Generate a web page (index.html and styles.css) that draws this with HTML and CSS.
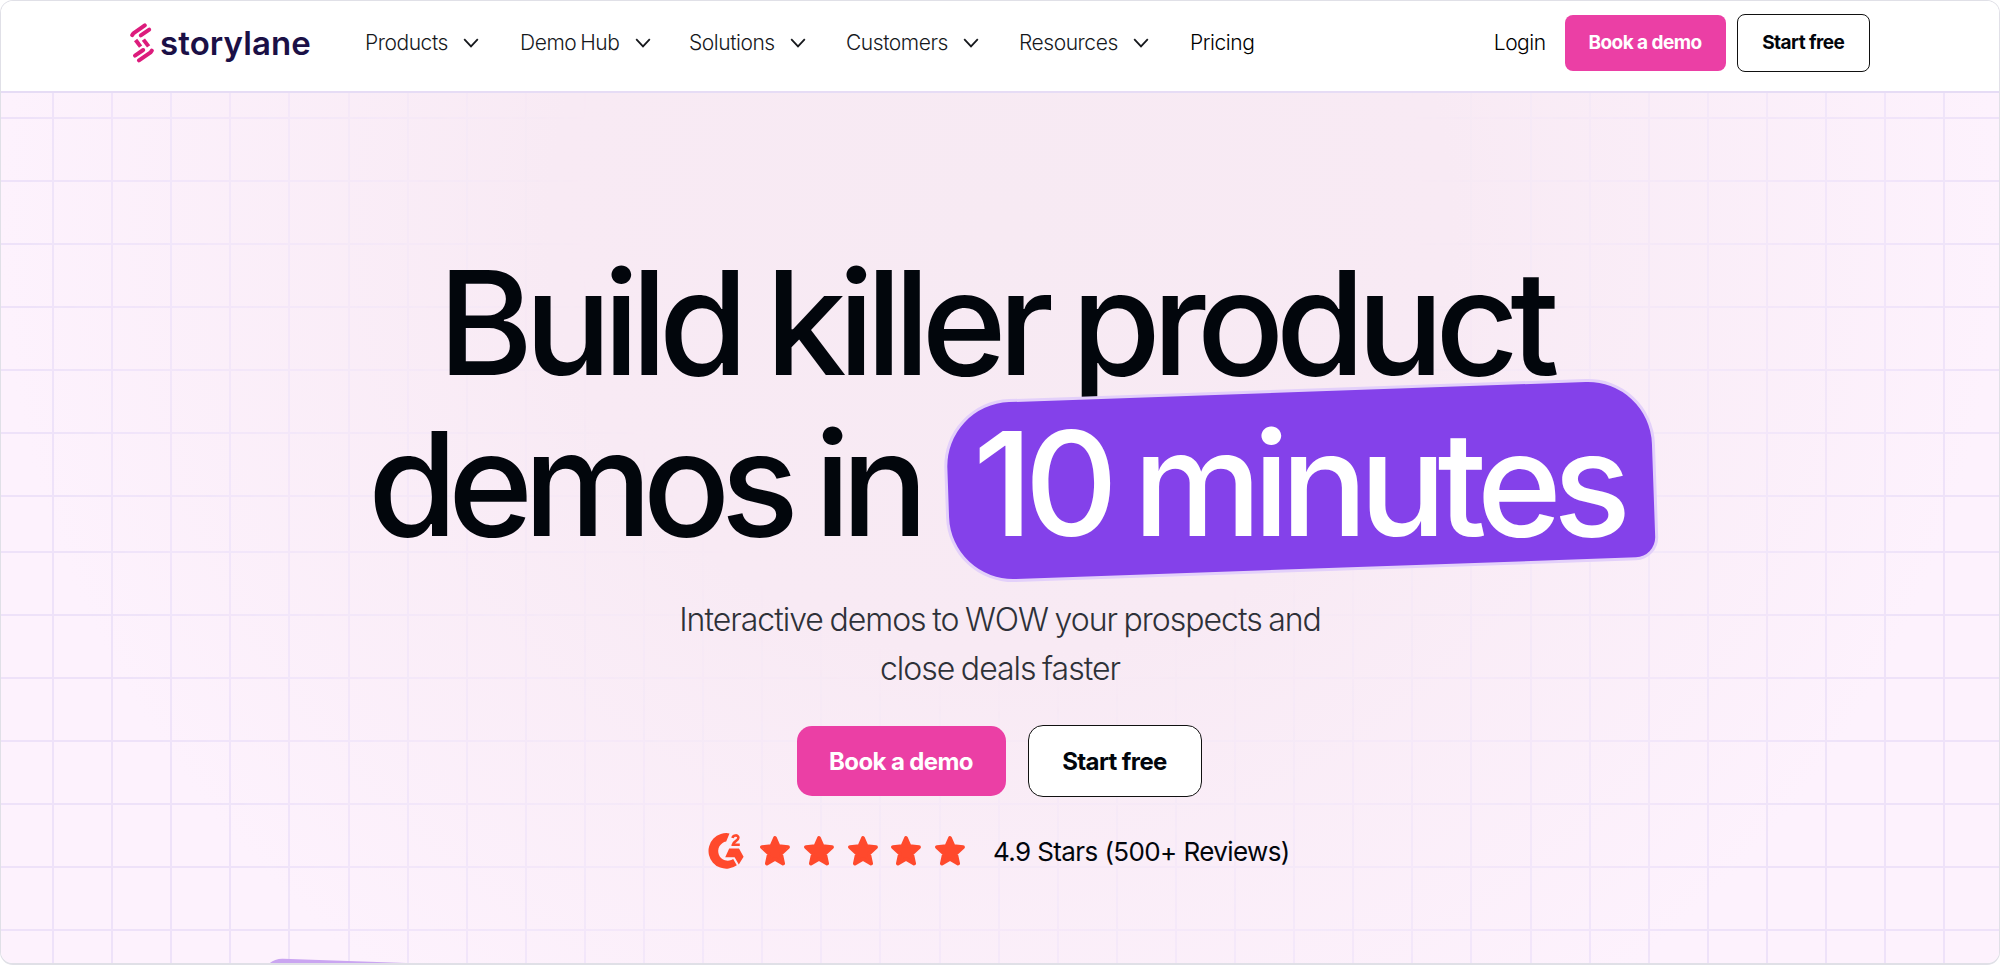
FILE: index.html
```html
<!DOCTYPE html>
<html lang="en">

<head>
  <meta charset="UTF-8">
  <meta name="viewport" content="width=device-width, initial-scale=1.0">
  <title>Storylane</title>
  <link rel="stylesheet" href="styles.css">
</head>

<body>

  <div class="page">

    <!-- Header -->
    <header class="header">
      <a class="logo" href="#">
        <svg class="logo-mark" viewBox="0 0 24 40" fill="none" stroke="#dc1c7c" stroke-width="4" stroke-linecap="round">
          <path d="M2.2 12.2 L3.4 10.4 L14.8 2.4" stroke-linejoin="round" />
          <path d="M10.8 12.4 L19.2 6.6" />
          <path d="M5.6 17 L10.6 23.6" stroke-linecap="butt" />
          <path d="M13.4 16.6 L18.6 23.4" stroke-linecap="butt" />
          <path d="M5 32.6 L13.2 27" />
          <path d="M9 37.4 L20.6 29.4 L21.8 27.6" stroke-linejoin="round" />
        </svg>
        <span class="logo-text">storylane</span>
      </a>

      <nav class="nav">
        <a href="#">Products <svg class="chevron" viewBox="0 0 16 10"><path d="M1.2 1.2 L8 8.4 L14.8 1.2" /></svg></a>
        <a href="#">Demo Hub <svg class="chevron" viewBox="0 0 16 10"><path d="M1.2 1.2 L8 8.4 L14.8 1.2" /></svg></a>
        <a href="#">Solutions <svg class="chevron" viewBox="0 0 16 10"><path d="M1.2 1.2 L8 8.4 L14.8 1.2" /></svg></a>
        <a href="#">Customers <svg class="chevron" viewBox="0 0 16 10"><path d="M1.2 1.2 L8 8.4 L14.8 1.2" /></svg></a>
        <a href="#">Resources <svg class="chevron" viewBox="0 0 16 10"><path d="M1.2 1.2 L8 8.4 L14.8 1.2" /></svg></a>
        <a class="dark" href="#">Pricing</a>
      </nav>

      <div class="actions">
        <a class="login" href="#">Login</a>
        <a class="btn btn-pink" href="#">Book a demo</a>
        <a class="btn btn-outline" href="#">Start free</a>
      </div>
    </header>

    <!-- Hero -->
    <main class="hero">
      <div class="hero-grid"></div>

      <h1 class="title">
        <span class="title-line line-one">Build killer product</span>
        <span class="title-line line-two">
          <span class="title-start">demos in</span>
          <span class="pill"><span class="pill-text">10 minutes</span></span>
        </span>
      </h1>

      <p class="subtitle">Interactive demos to WOW your prospects and<br>close deals faster</p>

      <div class="cta">
        <a class="btn btn-large btn-pink" href="#">Book a demo</a>
        <a class="btn btn-large btn-outline" href="#">Start free</a>
      </div>

      <!-- G2 rating -->
      <div class="rating">
        <svg class="g2" viewBox="0 0 36 36">
          <path d="M21.5 .4 A17.8 17.8 0 1 0 28.8 32.3 L25.2 26 A9.6 9.6 0 1 1 18.2 8.6 Z" fill="#ff492c" />
          <path d="M21.2 15.6 H31 L35.6 23.8 L30.8 31.4 L26.6 24.2 H17.2 Z" fill="#ff492c" />
          <path d="M24.6 5 C25 1.6 30.4 1.6 30.4 4.8 C30.4 7.8 25 8.4 24.8 11.8 H31.8" fill="none" stroke="#ff492c" stroke-width="2.6" />
        </svg>
        <svg class="star" viewBox="0 0 30 30"><path d="M15 2 L18.6 10.2 L28 11.1 L21 17.6 L23.1 27.5 L15 22.8 L6.9 27.5 L9 17.6 L2 11.1 L11.4 10.2 Z" /></svg>
        <svg class="star" viewBox="0 0 30 30"><path d="M15 2 L18.6 10.2 L28 11.1 L21 17.6 L23.1 27.5 L15 22.8 L6.9 27.5 L9 17.6 L2 11.1 L11.4 10.2 Z" /></svg>
        <svg class="star" viewBox="0 0 30 30"><path d="M15 2 L18.6 10.2 L28 11.1 L21 17.6 L23.1 27.5 L15 22.8 L6.9 27.5 L9 17.6 L2 11.1 L11.4 10.2 Z" /></svg>
        <svg class="star" viewBox="0 0 30 30"><path d="M15 2 L18.6 10.2 L28 11.1 L21 17.6 L23.1 27.5 L15 22.8 L6.9 27.5 L9 17.6 L2 11.1 L11.4 10.2 Z" /></svg>
        <svg class="star" viewBox="0 0 30 30"><path d="M15 2 L18.6 10.2 L28 11.1 L21 17.6 L23.1 27.5 L15 22.8 L6.9 27.5 L9 17.6 L2 11.1 L11.4 10.2 Z" /></svg>
        <span class="rating-text">4.9 Stars (500+ Reviews)</span>
      </div>

      <div class="preview-card"></div>
    </main>

  </div>

</body>

</html>
```

FILE: styles.css
```css
* {
  box-sizing: border-box;
}

body {
  margin: 0;
  background: #fff;
  font-family: Inter, "Liberation Sans", sans-serif;
  color: #02060c;
}

a {
  color: inherit;
  text-decoration: none;
}

.page {
  width: 2000px;
  height: 965px;
  border: 1px solid #e0e0e7;
  border-bottom-width: 2px;
  border-radius: 13px;
  overflow: hidden;
}

/* Header */
.header {
  display: flex;
  align-items: center;
  height: 92px;
  padding: 1px 129px 8px;
  border-bottom: 2px solid #e6dcf5;
  background: #fff;
}

.logo {
  display: flex;
  align-items: center;
  width: 235px;
}

.logo-mark {
  width: 24px;
  height: 40px;
}

.logo-text {
  margin-left: 6px;
  font-size: 33px;
  font-weight: 620;
  line-height: 38px;
  letter-spacing: 0.1px;
  color: #1b1046;
}

.nav {
  display: grid;
  grid-template-columns: 155px 169px 157px 173px 171px auto;
  font-size: 21px;
  font-weight: 340;
  letter-spacing: -0.45px;
  word-spacing: -1.5px;
  color: #16181c;
}

.nav a {
  display: flex;
  align-items: center;
  padding-top: 1px;
  line-height: 30px;
}

.nav .dark {
  color: #000;
}

.chevron {
  width: 16px;
  height: 10px;
  margin-left: 15.5px;
  fill: none;
  stroke: #16181c;
  stroke-width: 1.8;
}

.actions {
  display: flex;
  align-items: center;
  margin-left: auto;
}

.login {
  margin-right: 19px;
  font-size: 21px;
  font-weight: 340;
  letter-spacing: -0.5px;
  color: #000;
}

/* Buttons */
.btn {
  display: flex;
  align-items: center;
  justify-content: center;
  border-radius: 8px;
  font-size: 19px;
  font-weight: 700;
  letter-spacing: -0.55px;
  white-space: nowrap;
}

.btn-pink {
  width: 161px;
  height: 56px;
  background: #eb3fa5;
  color: #fff;
}

.btn-outline {
  width: 133.5px;
  height: 58px;
  margin-left: 11px;
  border: 1.5px solid #111;
  background: #fff;
  color: #02060c;
}

.btn-large {
  border-radius: 15px;
  font-size: 24px;
  letter-spacing: -0.6px;
}

.btn-large.btn-pink {
  width: 209px;
  height: 70px;
}

.btn-large.btn-outline {
  width: 174px;
  height: 72px;
  margin-left: 22px;
}

/* Hero */
.hero {
  position: relative;
  display: flex;
  flex-direction: column;
  align-items: center;
  height: 870px;
  background: radial-gradient(ellipse 1000px 960px at 50% 15%, #f7eaf3 0%, #f8eaf4 45%, #fdf2fd 100%);
}

/* Grid lines, fading out towards the middle */
.hero-grid {
  position: absolute;
  inset: 0;
  background:
    repeating-linear-gradient(90deg, #eee2f9 0 2px, transparent 2px 59.1px) 51.3px 0 / 2100px 100% no-repeat,
    repeating-linear-gradient(180deg, #eee2f9 0 2px, transparent 2px 63px) 0 24px / 100% 381px no-repeat,
    repeating-linear-gradient(180deg, #eee2f9 0 2px, transparent 2px 63px) 0 458px / 100% 420px no-repeat;
  -webkit-mask-image: radial-gradient(ellipse 1030px 1150px at 50% 12%, transparent 40%, #000 95%);
  mask-image: radial-gradient(ellipse 1030px 1150px at 50% 12%, transparent 40%, #000 95%);
}

/* Title */
.title {
  position: relative;
  width: 1300px;
  margin: 149px 0 0;
  font-size: 145px;
  font-weight: 550;
  line-height: 161px;
}

.title-line {
  display: flex;
  white-space: nowrap;
}

.line-one {
  padding-left: 88px;
  letter-spacing: -8.7px;
  word-spacing: -4px;
}

.line-two {
  padding-left: 18px;
}

.title-start {
  width: 579px;
  letter-spacing: -9.6px;
  word-spacing: -4px;
}

.pill {
  position: relative;
  padding-left: 26px;
  color: #fff;
}

.pill::before {
  content: "";
  position: absolute;
  top: -11px;
  left: 1px;
  width: 705px;
  height: 177px;
  border-radius: 64px 64px 20px 64px;
  background: #8441ea;
  box-shadow: 0 0 0 3px #e3d0fa;
  transform: rotate(-2deg);
}

.pill-text {
  position: relative;
  letter-spacing: -8.8px;
  word-spacing: -6px;
}

/* Subtitle */
.subtitle {
  position: relative;
  margin: 32px 0 0;
  font-size: 32px;
  font-weight: 360;
  line-height: 48.5px;
  letter-spacing: -1px;
  word-spacing: -1.5px;
  text-align: center;
  color: #2e3138;
}

.cta {
  position: relative;
  left: -1px;
  display: flex;
  align-items: center;
  margin-top: 32px;
}

/* Rating */
.rating {
  position: relative;
  display: flex;
  align-items: center;
  width: 584px;
  height: 38px;
  margin-top: 35px;
}

.g2 {
  width: 36px;
  height: 36px;
  margin-right: 16px;
}

.star {
  width: 30px;
  height: 30px;
  margin-right: 13.8px;
  fill: #ff492c;
  stroke: #ff492c;
  stroke-width: 3.8;
  stroke-linejoin: round;
}

.rating-text {
  margin-left: 14px;
  font-size: 26px;
  font-weight: 440;
  letter-spacing: -0.6px;
  white-space: nowrap;
}

/* Top of the preview card below the fold */
.preview-card {
  position: absolute;
  top: 865px;
  left: 262px;
  width: 700px;
  height: 60px;
  border-radius: 20px;
  background: #caa5f1;
  transform: rotate(2deg);
  transform-origin: 0 0;
}
```
